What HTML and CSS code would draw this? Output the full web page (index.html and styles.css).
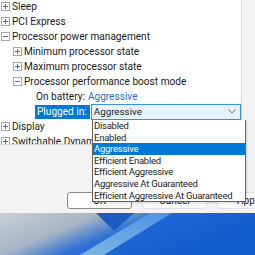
FILE: index.html
```html
<!DOCTYPE html>
<html>
  <head>
    <title>Power Options</title>
    <link rel="stylesheet" href="styles.css">
  </head>
  <body>
    <div class="dialog">
      <div class="tree">
        <div class="row lvl1">
          <svg class="toggle" width="9" height="9"><rect x="0.5" y="0.5" width="8" height="8"/><path d="M2 4.5h5M4.5 2v5"/></svg>
          <span>Sleep</span>
        </div>
        <div class="row lvl1">
          <svg class="toggle" width="9" height="9"><rect x="0.5" y="0.5" width="8" height="8"/><path d="M2 4.5h5M4.5 2v5"/></svg>
          <span>PCI Express</span>
        </div>
        <div class="row lvl1">
          <svg class="toggle" width="9" height="9"><rect x="0.5" y="0.5" width="8" height="8"/><path d="M2 4.5h5"/></svg>
          <span>Processor power management</span>
        </div>
        <div class="row lvl2">
          <svg class="toggle" width="9" height="9"><rect x="0.5" y="0.5" width="8" height="8"/><path d="M2 4.5h5M4.5 2v5"/></svg>
          <span>Minimum processor state</span>
        </div>
        <div class="row lvl2">
          <svg class="toggle" width="9" height="9"><rect x="0.5" y="0.5" width="8" height="8"/><path d="M2 4.5h5M4.5 2v5"/></svg>
          <span>Maximum processor state</span>
        </div>
        <div class="row lvl2">
          <svg class="toggle" width="9" height="9"><rect x="0.5" y="0.5" width="8" height="8"/><path d="M2 4.5h5"/></svg>
          <span>Processor performance boost mode</span>
        </div>
        <div class="row lvl3">
          <span class="label">On battery:</span>
          <span class="value">Aggressive</span>
        </div>
        <div class="row lvl3">
          <span class="label selected">Plugged in:</span>
          <div class="select">
            <span>Aggressive</span>
            <svg width="8" height="5"><path d="M0.5 0.5l3.5 3.5l3.5-3.5"/></svg>
          </div>
        </div>
        <div class="row lvl1">
          <svg class="toggle" width="9" height="9"><rect x="0.5" y="0.5" width="8" height="8"/><path d="M2 4.5h5M4.5 2v5"/></svg>
          <span>Display</span>
        </div>
        <div class="row lvl1">
          <svg class="toggle" width="9" height="9"><rect x="0.5" y="0.5" width="8" height="8"/><path d="M2 4.5h5M4.5 2v5"/></svg>
          <span>Switchable Dynamic Graphics</span>
        </div>
      </div>
      <div class="buttons">
        <button class="default">OK</button>
        <button>Cancel</button>
        <button>Apply</button>
      </div>
      <ul class="options">
        <li>Disabled</li>
        <li>Enabled</li>
        <li class="active">Aggressive</li>
        <li>Efficient Enabled</li>
        <li>Efficient Aggressive</li>
        <li>Aggressive At Guaranteed</li>
        <li>Efficient Aggressive At Guaranteed</li>
      </ul>
    </div>
    <div class="desktop">
      <svg width="255" height="42" viewBox="0 0 255 42">
        <defs>
          <linearGradient id="bg" x1="0" y1="0" x2="1" y2="0.4">
            <stop offset="0" stop-color="#c9d0d8"/>
            <stop offset="0.35" stop-color="#a6b4c4"/>
            <stop offset="0.55" stop-color="#2f72d4"/>
            <stop offset="1" stop-color="#0b55c6"/>
          </linearGradient>
          <linearGradient id="rib" x1="0" y1="1" x2="1" y2="0">
            <stop offset="0" stop-color="#7fb3e6"/>
            <stop offset="1" stop-color="#4b95e6"/>
          </linearGradient>
        </defs>
        <rect width="255" height="42" fill="url(#bg)"/>
        <path d="M96 0h38l-20 18z" fill="#1d5cc0"/>
        <path d="M150 0h22l-68 42h-24z" fill="url(#rib)"/>
        <path d="M172 0h83v42h-151z" fill="#1560d2" opacity="0.6"/>
      </svg>
    </div>
  </body>
</html>
```

FILE: styles.css
```css
body
{
  margin: 0;
  width: 255px;
  height: 255px;
  overflow: hidden;
  font-family: Roboto, "Noto Sans", sans-serif;
  font-size: 10.1px;
  color: #1b1b1b;
}
.dialog
{
  position: relative;
  height: 213px;
  background: #f3f3f3;
}
.tree
{
  width: 243px;
  height: 145px;
  margin-left: -1px;
  box-sizing: border-box;
  background: #fff;
  border: 1px solid #d6d6d6;
  border-top: none;
  overflow: hidden;
}
.row
{
  display: flex;
  align-items: center;
  height: 15px;
  white-space: nowrap;
}
.row:first-child
{
  margin-top: -1px;
}
.lvl1
{
  padding-left: 1px;
}
.lvl2
{
  padding-left: 13px;
}
.lvl3
{
  padding-left: 36px;
}
.toggle
{
  flex: none;
  margin-right: 2px;
}
.toggle rect
{
  fill: #fff;
  stroke: #a8a8a8;
}
.toggle path
{
  stroke: #6a6a6a;
  stroke-width: 1;
  fill: none;
}
.value
{
  margin-left: 3px;
  color: #2a6fbf;
}
.label.selected
{
  margin-left: -1px;
  padding: 0 3px 0 2px;
  height: 14px;
  line-height: 14px;
  background: #0078d7;
  color: #fff;
}
.select
{
  display: flex;
  align-items: center;
  justify-content: space-between;
  width: 154px;
  height: 16px;
  margin-left: 1px;
  padding: 0 4px 0 2px;
  box-sizing: border-box;
  background: #e5f1fb;
  border: 1px solid #3c8fd8;
  font-size: 9.8px;
}
.select path
{
  fill: none;
  stroke: #7a7a7a;
}
.buttons
{
  display: flex;
  gap: 10px;
  padding: 47px 0 0 67px;
}
.buttons button
{
  flex: none;
  width: 65px;
  height: 17px;
  padding: 0;
  background: #fdfdfd;
  border: 1px solid #e2e2e2;
  border-radius: 3px;
  font-family: inherit;
  font-size: 10px;
  color: #1b1b1b;
}
.buttons button.default
{
  border-color: #8a8a8a;
}
.options
{
  position: absolute;
  left: 92px;
  top: 120px;
  width: 154px;
  margin: 0;
  padding: 0;
  box-sizing: border-box;
  list-style: none;
  background: #fff;
  border: 1px solid #646464;
  border-top: none;
  font-size: 9.5px;
  letter-spacing: -0.25px;
  box-shadow: 1px 1px 2px rgba(0, 0, 0, 0.15);
}
.options li
{
  height: 11.6px;
  line-height: 11.6px;
  padding-left: 1px;
  white-space: nowrap;
}
.options li.active
{
  background: #0078d7;
  color: #fff;
}
.desktop
{
  height: 42px;
}
.desktop svg
{
  display: block;
}
```
